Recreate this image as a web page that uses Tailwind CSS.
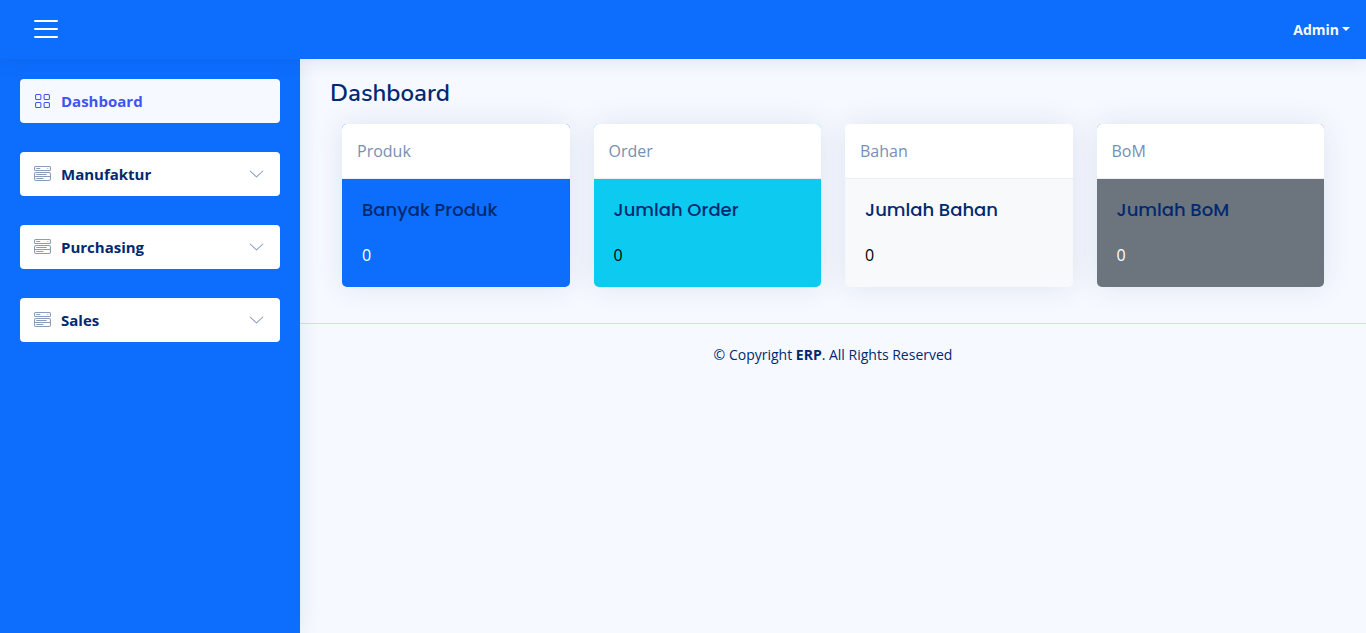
<!DOCTYPE html>
<html lang="id">
<head>
<meta charset="utf-8">
<meta name="viewport" content="width=device-width, initial-scale=1">
<title>Dashboard</title>
<script src="https://cdn.jsdelivr.net/npm/@tailwindcss/browser@4"></script>
</head>
<body class="min-h-screen flex flex-col bg-[#f6f9ff] text-[#012970] font-['Open_Sans',sans-serif]">
<svg class="hidden" aria-hidden="true">
  <symbol id="menu-wide" viewBox="0 0 16 16" preserveAspectRatio="none"><path d="M0 1.5A1.5 1.5 0 0 1 1.5 0h13A1.5 1.5 0 0 1 16 1.5v2A1.5 1.5 0 0 1 14.5 5h-13A1.5 1.5 0 0 1 0 3.5v-2zM1.5 1a.5.5 0 0 0-.5.5v2a.5.5 0 0 0 .5.5h13a.5.5 0 0 0 .5-.5v-2a.5.5 0 0 0-.5-.5h-13z"/><path d="M2 2.5a.5.5 0 0 1 .5-.5h3a.5.5 0 0 1 0 1h-3a.5.5 0 0 1-.5-.5zm10.823.323-.396-.396A.25.25 0 0 1 12.604 2h.792a.25.25 0 0 1 .177.427l-.396.396a.25.25 0 0 1-.354 0zM0 8a2 2 0 0 1 2-2h12a2 2 0 0 1 2 2v5a2 2 0 0 1-2 2H2a2 2 0 0 1-2-2V8zm1 3v2a1 1 0 0 0 1 1h12a1 1 0 0 0 1-1v-2H1zm14-1V8a1 1 0 0 0-1-1H2a1 1 0 0 0-1 1v2h14zM2 8.5a.5.5 0 0 1 .5-.5h9a.5.5 0 0 1 0 1h-9a.5.5 0 0 1-.5-.5zm0 4a.5.5 0 0 1 .5-.5h6a.5.5 0 0 1 0 1h-6a.5.5 0 0 1-.5-.5z"/></symbol>
  <symbol id="chevron" viewBox="0 0 16 16" preserveAspectRatio="none"><path fill-rule="evenodd" d="M1.646 4.646a.5.5 0 0 1 .708 0L8 10.293l5.646-5.647a.5.5 0 0 1 .708.708l-6 6a.5.5 0 0 1-.708 0l-6-6a.5.5 0 0 1 0-.708z"/></symbol>
</svg>

<header class="relative z-20 flex h-[59px] items-center justify-between bg-[#0d6efd] pl-[30px] pr-4 shadow-[0_2px_20px_rgba(1,41,112,0.1)]">
  <button type="button" aria-label="Toggle sidebar" class="pb-[2px] text-white">
    <svg class="size-8" viewBox="0 0 32 32" fill="currentColor"><rect x="4" y="7" width="24" height="2" rx="1"/><rect x="4" y="15" width="24" height="2" rx="1"/><rect x="4" y="23" width="24" height="2" rx="1"/></svg>
  </button>
  <button type="button" class="flex items-center gap-[3px] text-sm font-bold text-[#f6f9ff]">
    Admin
    <span class="mb-[2px] border-x-4 border-t-4 border-x-transparent border-t-current"></span>
  </button>
</header>

<div class="flex flex-1">
  <aside class="relative z-10 w-[300px] shrink-0 bg-[#0d6efd] p-5 shadow-[0_0_20px_rgba(1,41,112,0.1)]">
    <nav>
      <ul class="flex flex-col gap-[29px] text-[15px] leading-6 font-bold">
        <li><a href="#" class="flex items-center gap-[10px] rounded bg-[#f6f9ff] py-[10px] pr-[15px] pl-[14px] text-[#4154f1]">
          <svg class="h-4 w-[17px]" viewBox="0 0 16 16" preserveAspectRatio="none" fill="none" stroke="currentColor"><rect x="1.500" y="1.500" width="5" height="5" rx="1"/><rect x="9.500" y="1.500" width="5" height="5" rx="1"/><rect x="1.500" y="9.500" width="5" height="5" rx="1"/><rect x="9.500" y="9.500" width="5" height="5" rx="1"/></svg>
          Dashboard</a></li>
        <li><a href="#" class="flex items-center gap-[10px] rounded bg-white py-[10px] pr-[15px] pl-[14px]">
          <svg class="h-4 w-[17px] fill-[#899bbd]"><use href="#menu-wide"/></svg>Manufaktur
          <svg class="ml-auto h-4 w-[17px] fill-[#899bbd]"><use href="#chevron"/></svg></a></li>
        <li><a href="#" class="flex items-center gap-[10px] rounded bg-white py-[10px] pr-[15px] pl-[14px]">
          <svg class="h-4 w-[17px] fill-[#899bbd]"><use href="#menu-wide"/></svg>Purchasing
          <svg class="ml-auto h-4 w-[17px] fill-[#899bbd]"><use href="#chevron"/></svg></a></li>
        <li><a href="#" class="flex items-center gap-[10px] rounded bg-white py-[10px] pr-[15px] pl-[14px]">
          <svg class="h-4 w-[17px] fill-[#899bbd]"><use href="#menu-wide"/></svg>Sales
          <svg class="ml-auto h-4 w-[17px] fill-[#899bbd]"><use href="#chevron"/></svg></a></li>
      </ul>
    </nav>
  </aside>

  <div class="min-w-0 flex-1">
    <main class="px-[30px] pt-5 pb-9">
      <h1 class="mb-4 font-['Nunito','Open_Sans',sans-serif] text-2xl leading-[29px] font-semibold">Dashboard</h1>
      <div class="grid grid-cols-4 gap-6 px-3">
        <section class="rounded-[5px] bg-[#0d6efd] text-white shadow-[0_0_30px_rgba(1,41,112,0.1)]">
          <div class="rounded-t-[5px] border-b border-[#ebeef4] bg-white px-[15px] py-[15px] leading-6 text-[#798eb3]">Produk</div>
          <div class="p-5">
            <h2 class="mb-[22px] font-['Poppins','Inter',sans-serif] text-lg leading-[22px] font-medium text-[#012970]">Banyak Produk</h2>
            <p class="leading-6">0</p>
          </div>
        </section>
        <section class="rounded-[5px] bg-[#0dcaf0] text-black shadow-[0_0_30px_rgba(1,41,112,0.1)]">
          <div class="rounded-t-[5px] border-b border-[#ebeef4] bg-white px-[15px] py-[15px] leading-6 text-[#798eb3]">Order</div>
          <div class="p-5">
            <h2 class="mb-[22px] font-['Poppins','Inter',sans-serif] text-lg leading-[22px] font-medium text-[#012970]">Jumlah Order</h2>
            <p class="leading-6">0</p>
          </div>
        </section>
        <section class="rounded-[5px] bg-[#f8f9fa] text-black shadow-[0_0_30px_rgba(1,41,112,0.1)]">
          <div class="rounded-t-[5px] border-b border-[#ebeef4] bg-white px-[15px] py-[15px] leading-6 text-[#798eb3]">Bahan</div>
          <div class="p-5">
            <h2 class="mb-[22px] font-['Poppins','Inter',sans-serif] text-lg leading-[22px] font-medium text-[#012970]">Jumlah Bahan</h2>
            <p class="leading-6">0</p>
          </div>
        </section>
        <section class="rounded-[5px] bg-[#6c757d] text-white shadow-[0_0_30px_rgba(1,41,112,0.1)]">
          <div class="rounded-t-[5px] border-b border-[#ebeef4] bg-white px-[15px] py-[15px] leading-6 text-[#798eb3]">BoM</div>
          <div class="p-5">
            <h2 class="mb-[22px] font-['Poppins','Inter',sans-serif] text-lg leading-[22px] font-medium text-[#012970]">Jumlah BoM</h2>
            <p class="leading-6">0</p>
          </div>
        </section>
      </div>
    </main>
    <footer class="border-t border-[#cddfff] py-5 text-center text-sm leading-[21px]">© Copyright <strong>ERP</strong>. All Rights Reserved</footer>
  </div>
</div>
</body>
</html>
